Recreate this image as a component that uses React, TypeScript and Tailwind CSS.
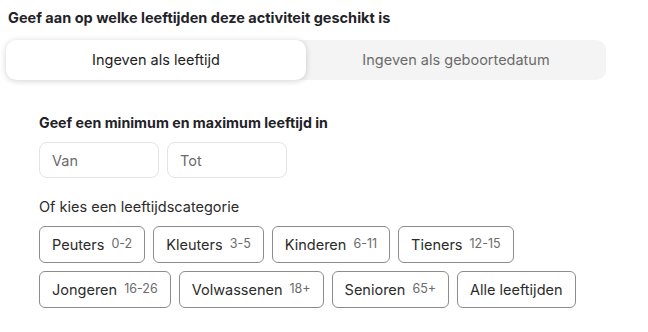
import React, { useState } from 'react';

const categories = [
    { label: 'Peuters', range: '0-2' },
    { label: 'Kleuters', range: '3-5' },
    { label: 'Kinderen', range: '6-11' },
    { label: 'Tieners', range: '12-15' },
    { label: 'Jongeren', range: '16-26' },
    { label: 'Volwassenen', range: '18+' },
    { label: 'Senioren', range: '65+' },
    { label: 'Alle leeftijden', range: '' },
];

const App: React.FC = () => {
    const [mode, setMode] = useState<'age' | 'birth'>('age');
    const [min, setMin] = useState('');
    const [max, setMax] = useState('');

    return (
        <div className="w-[648px] h-[332px] bg-white font-['Inter','Liberation_Sans',sans-serif] text-[#1f2328]">
            <div className="pt-2 pl-2">
                <h1 className="text-[14.5px] leading-5 font-bold text-[#1f2328]">
                    Geef aan op welke leeftijden deze activiteit geschikt is
                </h1>
            </div>

            {/* Tabs */}
            <div className="mt-3 ml-[6px] w-[600px] h-10 flex bg-[#f4f4f4] rounded-[10px]">
                <button
                    onClick={() => setMode('age')}
                    className={`flex-1 rounded-[10px] text-[14.5px] ${mode === 'age' ? 'bg-white text-[#222] shadow-[0_1px_6px_rgba(0,0,0,0.18)]' : 'text-[#6b6b6b]'}`}
                >
                    Ingeven als leeftijd
                </button>
                <button
                    onClick={() => setMode('birth')}
                    className={`flex-1 rounded-[10px] text-[14.5px] ${mode === 'birth' ? 'bg-white text-[#222] shadow-[0_1px_6px_rgba(0,0,0,0.18)]' : 'text-[#6b6b6b]'}`}
                >
                    Ingeven als geboortedatum
                </button>
            </div>

            {/* Content */}
            <div className="pl-[39px]">
                <h2 className="mt-[33px] text-[14.2px] leading-5 font-bold text-[#1f2328]">
                    Geef een minimum en maximum leeftijd in
                </h2>
                <div className="mt-[9px] flex gap-2">
                    <input
                        value={min}
                        onChange={(e) => setMin(e.target.value)}
                        placeholder="Van"
                        className="w-[120px] h-9 px-3 border border-[#e2e4e8] rounded-lg text-[14.5px] placeholder:text-[#6b6b6b] focus:outline-none"
                    />
                    <input
                        value={max}
                        onChange={(e) => setMax(e.target.value)}
                        placeholder="Tot"
                        className="w-[120px] h-9 px-3 border border-[#e2e4e8] rounded-lg text-[14.5px] placeholder:text-[#6b6b6b] focus:outline-none"
                    />
                </div>

                <p className="mt-[19px] text-[14.5px] leading-5 text-[#2b2b2b]">Of kies een leeftijdscategorie</p>

                <div className="mt-[9px] flex flex-wrap gap-x-2 gap-y-[8px] w-[560px]">
                    {categories.map((c) => (
                        <button
                            key={c.label}
                            className="h-[37px] px-3 flex items-center gap-[7px] border border-[#8c8c8c] rounded-md bg-white"
                        >
                            <span className="text-[14.5px] text-[#2b2b2b]">{c.label}</span>
                            {c.range && <span className="text-[12.5px] text-[#6b6b6b]">{c.range}</span>}
                        </button>
                    ))}
                </div>
            </div>
        </div>
    );
};

export default App;
